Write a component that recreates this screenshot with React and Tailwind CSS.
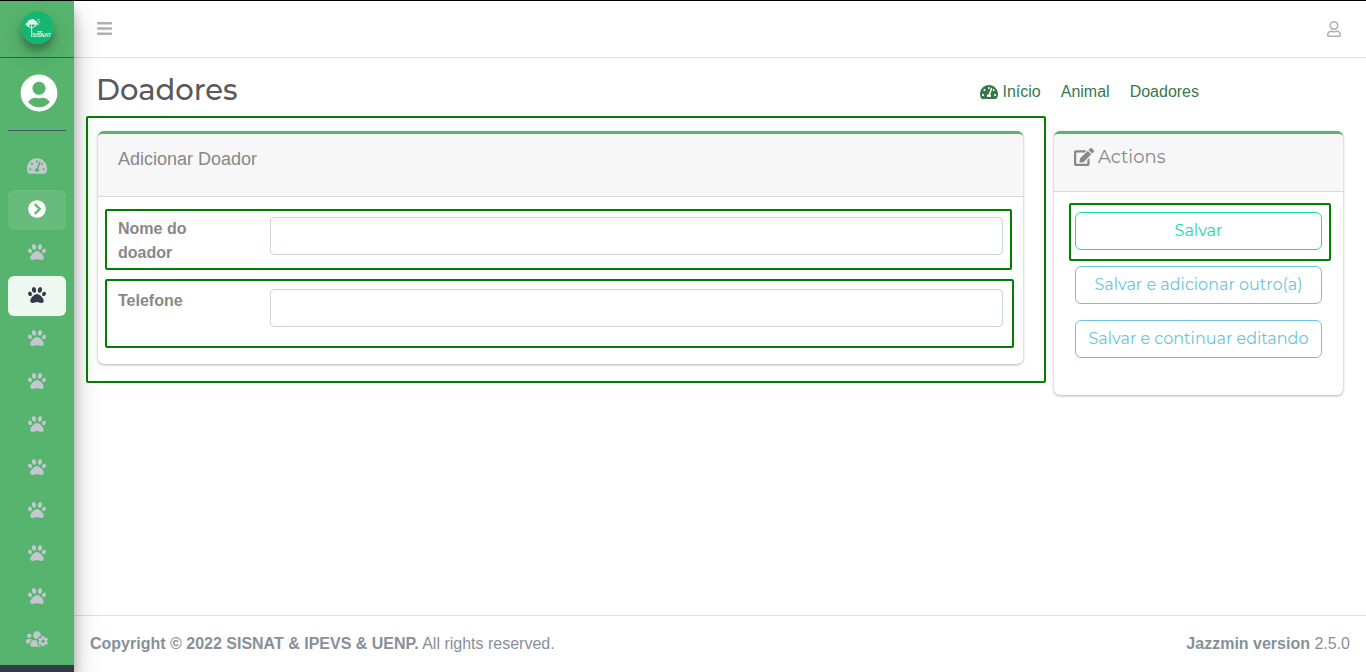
import React from "react";
import {
  FaBars,
  FaChevronCircleRight,
  FaEdit,
  FaPaw,
  FaRegUser,
  FaTachometerAlt,
  FaUserCircle,
  FaUsersCog,
} from "react-icons/fa";

const navItems = [
  { label: "Painel", icon: FaTachometerAlt, size: 20 },
  { label: "Animal", icon: FaChevronCircleRight, size: 18, state: "open" },
  { label: "Adoções", icon: FaPaw, size: 18 },
  { label: "Doadores", icon: FaPaw, size: 18, state: "active" },
  { label: "Animais", icon: FaPaw, size: 18 },
  { label: "Espécies", icon: FaPaw, size: 18 },
  { label: "Raças", icon: FaPaw, size: 18 },
  { label: "Coletas", icon: FaPaw, size: 18 },
  { label: "Destinos", icon: FaPaw, size: 18 },
  { label: "Exames", icon: FaPaw, size: 18 },
  { label: "Registros", icon: FaPaw, size: 18 },
  { label: "Usuários", icon: FaUsersCog, size: 22 },
];

const stateClass = {
  open: "bg-white/10 text-white",
  active: "bg-white/90 text-[#343a46]",
};

function Logo() {
  return (
    <svg
      viewBox="0 0 33 33"
      className="size-[33px] rounded-full shadow-[0_10px_20px_rgba(0,0,0,0.19),0_6px_6px_rgba(0,0,0,0.23)]"
      aria-hidden="true"
    >
      <circle cx="16.500" cy="16.500" r="16.500" fill="#14b671" />
      <g fill="#e4f6ec">
        <path d="M4.500 14.500c0-2 1-2.800 2-3 .2-1.900 1.600-2.800 3-2.700 1.200-1.200 3.500-.8 4.200.4 1.400.2 2 1 2 2.200 1.200.5 2.300 1.500 2.100 2.900l-2.500-1-1.200 1.200-1.700-1.500-1.400 1.300-1.700-1.200-1.500 2.100-1.500-.9z" />
        <path d="M10 13.500h1l.4 12.500h-1.300z" />
        <path d="M6.500 14l4.200 2.800-.3.800L6 15.200zM15.300 13.800l-4.200 2.800v.9l4.800-3z" />
        <circle cx="17.600" cy="8.500" r="0.800" />
        <circle cx="18.500" cy="11" r="0.800" />
        <circle cx="16.300" cy="10" r="0.500" />
        <path d="M16.500 21v-1.200l.8.500h2.900l.9-.8v1.500h-.9v.9h-.8v-.8h-1.300v.8h-.8v-.9z" />
      </g>
      <text
        x="11.800"
        y="26"
        fill="#e4f6ec"
        fontSize="5"
        fontWeight="700"
        fontFamily="Liberation Sans, sans-serif"
      >
        SISNAT
      </text>
    </svg>
  );
}

function Sidebar() {
  return (
    <aside className="relative z-10 flex w-[74px] shrink-0 flex-col border-b-[7px] border-[#343a46] bg-[#56b46e] shadow-[0_14px_28px_rgba(0,0,0,0.25),0_10px_10px_rgba(0,0,0,0.22)]">
      <a
        href="#inicio"
        aria-label="SISNAT"
        className="flex h-[57px] items-center justify-center border-b border-[#4b545c] pb-1"
      >
        <Logo />
      </a>
      <div className="mx-2 flex h-[73px] items-center justify-center border-b border-[#4b545c] pb-0.5 pl-1">
        <FaUserCircle size={38} className="text-white" />
      </div>
      <nav className="flex flex-col gap-[3px] px-2 pt-4">
        {navItems.map(({ label, icon: Icon, size, state }) => (
          <a
            key={label}
            href="#menu"
            aria-label={label}
            className={`flex h-10 items-center justify-center rounded-md pb-[3px] ${
              state ? stateClass[state] : "text-[#c2c7d0]"
            }`}
          >
            <Icon size={size} />
          </a>
        ))}
      </nav>
    </aside>
  );
}

function TopBar() {
  return (
    <header className="flex h-[57px] items-center justify-between border-b border-[#dee2e6] pr-6 pl-[22px] text-[#b0b0b0]">
      <button type="button" aria-label="Menu" className="pb-0.5">
        <FaBars size={17} />
      </button>
      <button type="button" aria-label="Conta">
        <FaRegUser size={16} />
      </button>
    </header>
  );
}

function Field({ id, label, className }) {
  return (
    <div className={`flex rounded-xs border-2 border-[#008000] pl-[11px] ${className}`}>
      <label
        htmlFor={id}
        className="w-[152px] shrink-0 pr-16 font-bold text-[#888]"
      >
        {label}
      </label>
      <input
        id={id}
        type="text"
        className="h-[38px] min-w-0 flex-1 rounded border border-[#ced4da] bg-white px-3"
      />
    </div>
  );
}

const cardClass =
  "rounded-md border-t-[3px] border-[#56b46e] bg-white shadow-[0_0_1px_rgba(0,0,0,0.13),0_1px_3px_rgba(0,0,0,0.3)]";

const buttonClass =
  "h-[38px] w-full rounded-md border font-[Montserrat,Inter,sans-serif] text-base font-normal";

export default function App() {
  return (
    <div className="flex min-h-screen border-t border-black bg-white font-['Liberation_Sans',Arial,sans-serif] text-base leading-6">
      <Sidebar />
      <div className="flex min-w-0 flex-1 flex-col">
        <TopBar />
        <main className="flex-1 pr-[23px] pl-3">
          <div className="flex h-[58px] items-center justify-between pt-2 pl-2.5">
            <h1 className="pb-0.5 font-[Montserrat,Inter,sans-serif] text-[29px] leading-9 font-medium text-[#5a5a5a]">
              Doadores
            </h1>
            <nav className="mr-36 flex gap-5 pt-0.5 text-[#36784a]">
              <a href="#inicio" className="flex items-center gap-1">
                <FaTachometerAlt size={18} />
                Início
              </a>
              <a href="#animal">Animal</a>
              <a href="#doadores">Doadores</a>
            </nav>
          </div>
          <form className="flex items-start gap-2">
            <div className="min-w-0 flex-1 rounded-xs border-2 border-[#008000] pt-[13px] pr-[21px] pb-[17px] pl-2.5">
              <section className={cardClass}>
                <div className="h-[63px] rounded-t-sm border-b border-[#d8d8d8] bg-[#f7f7f7] px-5 pt-[11px]">
                  <h2 className="text-lg leading-7 text-[#888]">
                    Adicionar Doador
                  </h2>
                </div>
                <div className="flex flex-col gap-[9px] pt-3 pr-[9px] pb-4 pl-[7px]">
                  <Field
                    id="nome"
                    label="Nome do doador"
                    className="mr-0.5 h-[61px] pt-1.5 pr-[7px]"
                  />
                  <Field
                    id="telefone"
                    label="Telefone"
                    className="h-[69px] pt-2 pr-[9px]"
                  />
                </div>
              </section>
            </div>
            <section className={`mt-[15px] w-[289px] shrink-0 ${cardClass}`}>
              <div className="h-[58px] rounded-t-sm border-b border-[#d8d8d8] bg-[#f7f7f7] px-5 pt-[9px]">
                <h2 className="flex items-center gap-1 font-[Montserrat,Inter,sans-serif] text-lg leading-7 font-normal text-[#888]">
                  <FaEdit size={20} />
                  Actions
                </h2>
              </div>
              <div className="pt-[11px] pr-3 pb-[37px] pl-[15px]">
                <div className="rounded-xs border-2 border-[#008000] pt-[7px] pr-[7px] pb-[9px] pl-1">
                  <button
                    type="submit"
                    className={`${buttonClass} border-[#20dba0] text-[#20dba0]`}
                  >
                    Salvar
                  </button>
                </div>
                <div className="flex flex-col gap-4 pt-[5px] pr-[9px] pl-1.5">
                  <button
                    type="button"
                    className={`${buttonClass} border-[#6cc3dc] text-[#6cc3dc]`}
                  >
                    Salvar e adicionar outro(a)
                  </button>
                  <button
                    type="button"
                    className={`${buttonClass} border-[#6cc3dc] text-[#6cc3dc]`}
                  >
                    Salvar e continuar editando
                  </button>
                </div>
              </div>
            </section>
          </form>
        </main>
        <footer className="flex h-[57px] items-center justify-between border-t border-[#dee2e6] px-4 text-[#869099]">
          <p>
            <strong>Copyright © 2022 SISNAT &amp; IPEVS &amp; UENP.</strong> All
            rights reserved.
          </p>
          <p>
            <strong>Jazzmin version</strong> 2.5.0
          </p>
        </footer>
      </div>
    </div>
  );
}
